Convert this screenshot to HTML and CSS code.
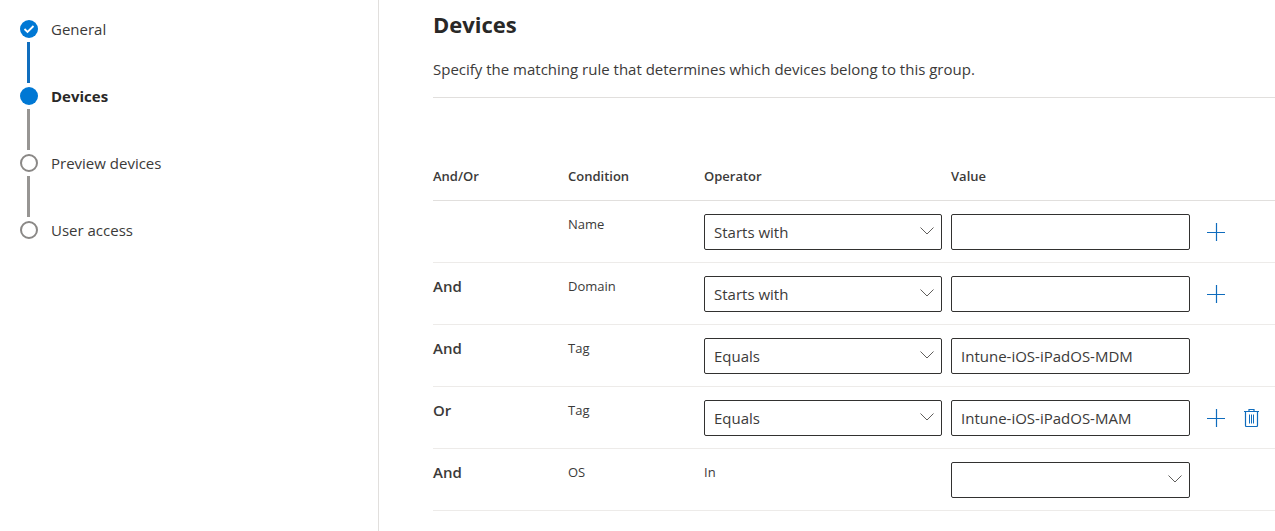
FILE: index.html
```
<!DOCTYPE html>
<html lang="en">
  <head>
    <meta charset="UTF-8" />
    <meta name="viewport" content="width=device-width, initial-scale=1.0" />
    <title>Create device group</title>
    <link rel="stylesheet" href="styles.css">
  </head>

  <body>
    <!-- ICONS -->
    <svg class="sprite" aria-hidden="true">
      <symbol id="chevron" viewBox="0 0 14 8">
        <path d="M0.5 0.5 L7 7 L13.5 0.5" fill="none" stroke="currentColor" />
      </symbol>
      <symbol id="plus" viewBox="0 0 18 18">
        <path d="M9.5 0 V18 M0 9.5 H18" fill="none" stroke="currentColor" stroke-width="1.2" />
      </symbol>
      <symbol id="trash" viewBox="0 0 15 18">
        <path d="M0 2.5 H15 M5 2.5 V0.5 H10 V2.5 M1.5 2.5 V16.5 Q1.5 17.5 2.5 17.5 H12.5 Q13.5 17.5 13.5 16.5 V2.5" fill="none" stroke="currentColor" stroke-width="1.2" />
        <path d="M5.5 5.5 V14.5 M7.5 5.5 V14.5 M9.5 5.5 V14.5" fill="none" stroke="currentColor" />
      </symbol>
    </svg>

    <!-- WIZARD STEPS -->
    <nav class="steps">
      <ol>
        <li class="step done">
          <span class="dot">
            <svg viewBox="0 0 18 18" aria-hidden="true"><path d="M4.5 9 L7.5 12 L13.5 6" fill="none" stroke="#fff" stroke-width="1.8" /></svg>
          </span>
          <span class="label">General</span>
        </li>
        <li class="step current"><span class="dot"></span><span class="label">Devices</span></li>
        <li class="step"><span class="dot"></span><span class="label">Preview devices</span></li>
        <li class="step"><span class="dot"></span><span class="label">User access</span></li>
      </ol>
    </nav>

    <!-- MATCHING RULE -->
    <main>
      <h1>Devices</h1>
      <p class="intro">Specify the matching rule that determines which devices belong to this group.</p>

      <table>
        <colgroup>
          <col class="col-join" />
          <col class="col-condition" />
          <col class="col-operator" />
          <col class="col-value" />
          <col />
        </colgroup>
        <thead>
          <tr>
            <th scope="col">And/Or</th>
            <th scope="col">Condition</th>
            <th scope="col">Operator</th>
            <th scope="col">Value</th>
            <td></td>
          </tr>
        </thead>
        <tbody>
          <tr>
            <td class="join"></td>
            <td>Name</td>
            <td>
              <div class="dropdown">
                <select aria-label="Name operator"><option>Starts with</option><option>Equals</option></select>
                <svg aria-hidden="true"><use href="#chevron" /></svg>
              </div>
            </td>
            <td><input type="text" aria-label="Name value" /></td>
            <td>
              <div class="actions">
                <button type="button" aria-label="Add name condition"><svg class="icon-plus"><use href="#plus" /></svg></button>
              </div>
            </td>
          </tr>
          <tr>
            <td class="join">And</td>
            <td>Domain</td>
            <td>
              <div class="dropdown">
                <select aria-label="Domain operator"><option>Starts with</option><option>Equals</option></select>
                <svg aria-hidden="true"><use href="#chevron" /></svg>
              </div>
            </td>
            <td><input type="text" aria-label="Domain value" /></td>
            <td>
              <div class="actions">
                <button type="button" aria-label="Add domain condition"><svg class="icon-plus"><use href="#plus" /></svg></button>
              </div>
            </td>
          </tr>
          <tr>
            <td class="join">And</td>
            <td>Tag</td>
            <td>
              <div class="dropdown">
                <select aria-label="Tag operator"><option>Equals</option><option>Starts with</option></select>
                <svg aria-hidden="true"><use href="#chevron" /></svg>
              </div>
            </td>
            <td><input type="text" aria-label="Tag value" value="Intune-iOS-iPadOS-MDM" /></td>
            <td></td>
          </tr>
          <tr>
            <td class="join">Or</td>
            <td>Tag</td>
            <td>
              <div class="dropdown">
                <select aria-label="Second tag operator"><option>Equals</option><option>Starts with</option></select>
                <svg aria-hidden="true"><use href="#chevron" /></svg>
              </div>
            </td>
            <td><input type="text" aria-label="Second tag value" value="Intune-iOS-iPadOS-MAM" /></td>
            <td>
              <div class="actions">
                <button type="button" aria-label="Add tag condition"><svg class="icon-plus"><use href="#plus" /></svg></button>
                <button type="button" aria-label="Delete tag condition"><svg class="icon-trash"><use href="#trash" /></svg></button>
              </div>
            </td>
          </tr>
          <tr>
            <td class="join">And</td>
            <td>OS</td>
            <td>In</td>
            <td>
              <div class="dropdown">
                <select aria-label="OS value"><option></option><option>iOS</option></select>
                <svg aria-hidden="true"><use href="#chevron" /></svg>
              </div>
            </td>
            <td></td>
          </tr>
        </tbody>
      </table>
    </main>
  </body>
</html>
```
FILE: styles.css
```
* {
  box-sizing: border-box;
}
body {
  display: flex;
  min-height: 100vh;
  margin: 0;
  background-color: #fff;
  color: #3b3a39;
  font-family: "Open Sans", "Noto Sans", sans-serif;
  font-size: 15px;
  line-height: 20px;
}
.sprite {
  display: none;
}

/* steps */
.steps {
  flex: 0 0 379px;
  border-right: 1px solid #e1dfdd;
}
.steps ol {
  margin: 0;
  padding: 19px 20px;
  list-style: none;
}
.step {
  display: grid;
  grid-template-columns: 18px 1fr;
  column-gap: 13px;
  grid-template-rows: 20px 41px;
  row-gap: 3px;
  margin-bottom: 3px;
  align-items: center;
}
.step:not(:last-child)::after {
  content: "";
  width: 3px;
  height: 41px;
  margin-left: 7px;
  background-color: #979593;
}
.dot {
  width: 18px;
  height: 18px;
  border: 2px solid #8a8886;
  border-radius: 50%;
}
.dot svg {
  display: block;
}
.done .dot,
.current .dot {
  border: none;
  background-color: #0078d4;
}
.step.done::after {
  background-color: #106ebe;
}
.current .label {
  color: #292827;
  font-weight: 700;
}

/* content */
main {
  flex: 1;
  min-width: 0;
  padding: 8px 0 20px 54px;
}
h1 {
  margin: 0;
  color: #292827;
  font-size: 22px;
  line-height: 32px;
  font-weight: 700;
}
.intro {
  margin: 19px 0 52px;
  padding-bottom: 18px;
  border-bottom: 1px solid #e1dfdd;
}
table {
  width: 100%;
  table-layout: fixed;
  border-spacing: 0;
}
.col-join {
  width: 135px;
}
.col-condition {
  width: 136px;
}
.col-operator {
  width: 247px;
}
.col-value {
  width: 248px;
}
th,
td {
  padding: 13px 9px 12px 0;
  border-bottom: 1px solid #edebe9;
  font-size: 13px;
  text-align: left;
  vertical-align: top;
}
thead th,
thead td {
  padding: 16px 0 14px;
  border-color: #e1dfdd;
  font-weight: 600;
}
td.join {
  font-size: 15px;
  font-weight: 600;
}
select,
input {
  display: block;
  width: 100%;
  height: 36px;
  padding: 0 9px;
  border: 1px solid #323130;
  border-radius: 2px;
  background-color: #fff;
  color: #3b3a39;
  font: inherit;
  font-size: 15px;
  appearance: none;
}
.dropdown {
  position: relative;
}
.dropdown svg {
  position: absolute;
  top: 13px;
  right: 8px;
  width: 14px;
  height: 8px;
  color: #605e5c;
  pointer-events: none;
}
.actions {
  display: flex;
  align-items: center;
  gap: 19px;
  height: 36px;
  padding-left: 8px;
}
button {
  padding: 0;
  border: none;
  background: none;
  color: #0f6cbd;
  cursor: pointer;
}
button svg {
  display: block;
  height: 18px;
}
.icon-plus {
  width: 18px;
}
.icon-trash {
  width: 15px;
}
```
